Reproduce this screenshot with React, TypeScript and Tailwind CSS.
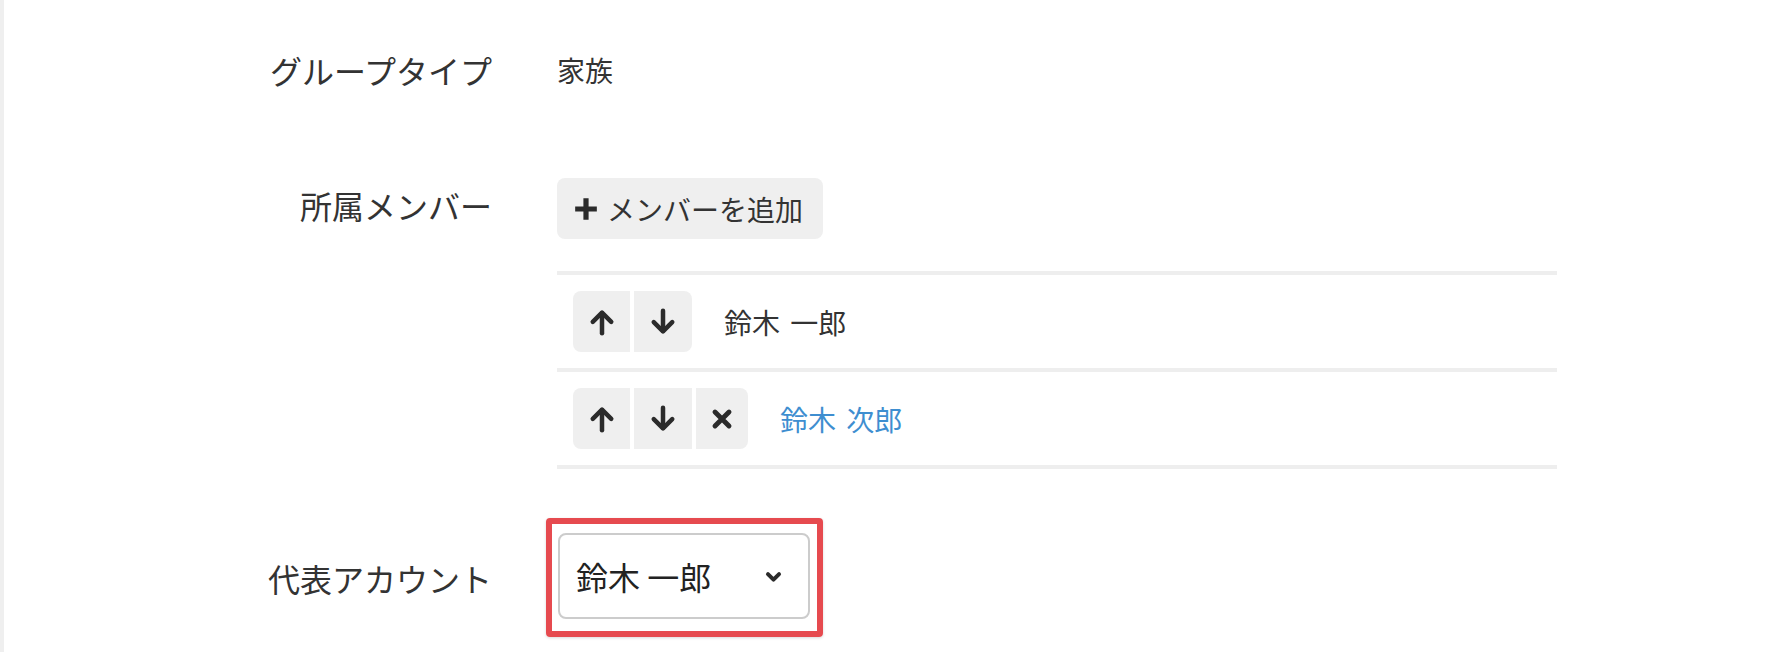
const FONT = "font-['Noto_Sans_CJK_JP',sans-serif]";

type Member = { id: number; name: string; removable: boolean; link: boolean };

const MEMBERS: Member[] = [
  { id: 1, name: "鈴木 一郎", removable: false, link: false },
  { id: 2, name: "鈴木 次郎", removable: true, link: true },
];

function ArrowIcon({ down = false }: { down?: boolean }) {
  return (
    <svg
      width={30}
      height={30}
      viewBox="0 0 24 24"
      fill="none"
      stroke="currentColor"
      strokeWidth={3.6}
      strokeLinecap="round"
      strokeLinejoin="round"
      className={down ? "rotate-180" : ""}
    >
      <path d="M12 21V5" />
      <path d="M4.6 11.9 12 4.5l7.4 7.4" />
    </svg>
  );
}

function CloseIcon() {
  return (
    <svg width={28} height={28} viewBox="0 0 24 24" fill="none" stroke="currentColor" strokeWidth={4.2} strokeLinecap="round">
      <path d="M6 6l12 12M18 6 6 18" />
    </svg>
  );
}

function PlusIcon() {
  return (
    <svg width={26} height={26} viewBox="0 0 24 24" fill="none" stroke="currentColor" strokeWidth={4.8}>
      <path d="M12 2v20M2 12h20" />
    </svg>
  );
}

function ChevronIcon() {
  return (
    <svg width={19} height={19} viewBox="0 0 24 24" fill="none" stroke="currentColor" strokeWidth={5} strokeLinecap="round" strokeLinejoin="round">
      <path d="M5 9l7 7 7-7" />
    </svg>
  );
}

function Label({ children }: { children: React.ReactNode }) {
  return (
    <div className="w-[488px] shrink-0 text-right text-[32px] leading-[48px] text-[#333]">
      {children}
    </div>
  );
}

function MemberRow({ m }: { m: Member }) {
  return (
    <div className="flex items-center border-b-4 border-[#eeeeee] px-[16px] py-[16px]">
      <div className="flex gap-[4px] text-[#2b2b2b]">
        <button className="flex h-[61px] w-[57px] items-center justify-center rounded-l-[8px] bg-[#efefef]">
          <ArrowIcon />
        </button>
        <button
          className={`flex h-[61px] w-[58px] items-center justify-center bg-[#efefef] ${
            m.removable ? "" : "rounded-r-[8px]"
          }`}
        >
          <ArrowIcon down />
        </button>
        {m.removable && (
          <button className="flex h-[61px] w-[52px] items-center justify-center rounded-r-[8px] bg-[#efefef]">
            <CloseIcon />
          </button>
        )}
      </div>
      <span
        className={`ml-[32px] whitespace-nowrap text-[28px] leading-[40px] [word-spacing:4px] ${
          m.link ? "text-[#3e8ed0]" : "text-[#333]"
        }`}
      >
        {m.name}
      </span>
    </div>
  );
}

export default function App() {
  return (
    <div className={`flex h-[652px] w-full bg-white ${FONT}`}>
      <div className="w-[4px] shrink-0 bg-[#efefef]" />
      <div className="flex flex-col pt-[46px]">
        {/* グループタイプ */}
        <div className="flex items-center">
          <Label>グループタイプ</Label>
          <div className="ml-[65px] text-[28px] leading-[48px] text-[#333]">家族</div>
        </div>

        {/* 所属メンバー */}
        <div className="mt-[84px] flex items-start">
          <div className="pt-[3px]">
            <Label>所属メンバー</Label>
          </div>
          <div className="ml-[65px] flex flex-col items-start">
            <button className="flex h-[61px] items-center gap-[8px] whitespace-nowrap rounded-[8px] bg-[#efefef] pl-[16px] pr-[20px] text-[28px] text-[#333]">
              <span className="text-[#2b2b2b]">
                <PlusIcon />
              </span>
              <span className="leading-[40px]">メンバーを追加</span>
            </button>
            <div className="mt-[32px] w-[1000px] border-t-4 border-[#eeeeee]">
              {MEMBERS.map((m) => (
                <MemberRow key={m.id} m={m} />
              ))}
            </div>
          </div>
        </div>

        {/* 代表アカウント */}
        <div className="mt-[49px] flex items-center">
          <Label>代表アカウント</Label>
          <div className="ml-[54px] rounded-[4px] border-[6px] border-[#e64a4f] pb-[12px] pl-[6px] pr-[7px] pt-[9px] shadow-[0_1px_3px_rgba(0,0,0,0.15)]">
            <div className="flex h-[86px] w-[252px] items-center justify-between rounded-[8px] border-2 border-[#cccccc] bg-white pl-[16px] pr-[25px] text-[32px] text-[#222]">
              <span className="whitespace-nowrap leading-[44px]">鈴木 一郎</span>
              <span className="text-[#2b2b2b]">
                <ChevronIcon />
              </span>
            </div>
          </div>
        </div>
      </div>
    </div>
  );
}
